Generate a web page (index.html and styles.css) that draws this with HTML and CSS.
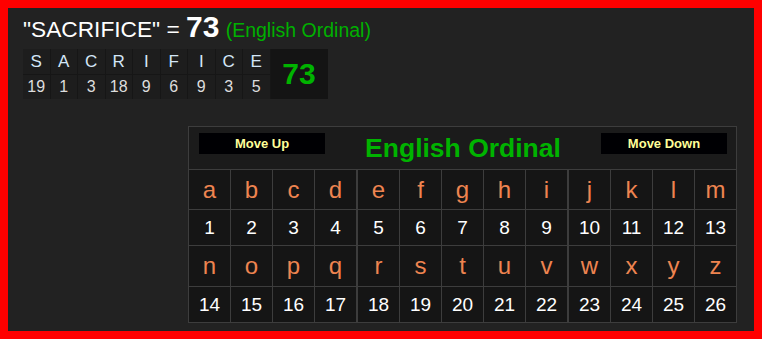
FILE: index.html
```html
<!DOCTYPE html>
<html>
<head>
<meta charset="utf-8">
<link rel="stylesheet" href="styles.css">
</head>
<body>
<div class="page">
  <h1 class="result">"SACRIFICE" = <span class="total">73</span> <span class="cipher-name">(English Ordinal)</span></h1>
  <div class="word">
    <div class="wl">S</div><div class="wl">A</div><div class="wl">C</div><div class="wl">R</div><div class="wl">I</div><div class="wl">F</div><div class="wl">I</div><div class="wl">C</div><div class="wl">E</div>
    <div class="wsum">73</div>
    <div class="wn">19</div><div class="wn">1</div><div class="wn">3</div><div class="wn">18</div><div class="wn">9</div><div class="wn">6</div><div class="wn">9</div><div class="wn">3</div><div class="wn">5</div>
  </div>
  <div class="cipher">
    <div class="cipher-head">
      <div class="btn">Move Up</div>
      <div class="cipher-title">English Ordinal</div>
      <div class="btn">Move Down</div>
    </div>
    <div class="lt">a</div><div class="lt">b</div><div class="lt">c</div><div class="lt">d</div><div class="lt gs">e</div><div class="lt">f</div><div class="lt">g</div><div class="lt">h</div><div class="lt">i</div><div class="lt gs">j</div><div class="lt">k</div><div class="lt">l</div><div class="lt">m</div>
    <div class="nm">1</div><div class="nm">2</div><div class="nm">3</div><div class="nm">4</div><div class="nm gs">5</div><div class="nm">6</div><div class="nm">7</div><div class="nm">8</div><div class="nm">9</div><div class="nm gs">10</div><div class="nm">11</div><div class="nm">12</div><div class="nm">13</div>
    <div class="lt">n</div><div class="lt">o</div><div class="lt">p</div><div class="lt">q</div><div class="lt gs">r</div><div class="lt">s</div><div class="lt">t</div><div class="lt">u</div><div class="lt">v</div><div class="lt gs">w</div><div class="lt">x</div><div class="lt">y</div><div class="lt">z</div>
    <div class="nm">14</div><div class="nm">15</div><div class="nm">16</div><div class="nm">17</div><div class="nm gs">18</div><div class="nm">19</div><div class="nm">20</div><div class="nm">21</div><div class="nm">22</div><div class="nm gs">23</div><div class="nm">24</div><div class="nm">25</div><div class="nm">26</div>
  </div>
</div>
</body>
</html>
```

FILE: styles.css
```css
html, body {
  margin: 0;
  padding: 0;
}
body {
  box-sizing: border-box;
  height: 100vh;
  border: 8px solid #ff0000;
  background: #222222;
  font-family: "Liberation Sans", Arial, sans-serif;
  overflow: hidden;
}
.page {
  padding: 0 0 0 15px;
}
.result {
  margin: 0;
  padding-top: 5px;
  height: 36px;
  font-weight: normal;
  font-size: 22.7px;
  line-height: 28px;
  color: #ffffff;
  white-space: nowrap;
}
.total {
  font-weight: bold;
  font-size: 30px;
}
.cipher-name {
  font-size: 19.5px;
  color: #00b000;
}
.word {
  display: grid;
  grid-template-columns: repeat(9, 26.5px) 57px;
  grid-template-rows: 25px 24px;
  gap: 1px;
  width: max-content;
  background: #161616;
}
.wl, .wn {
  background: #1d1d1d;
  text-align: center;
}
.wl {
  color: #d4e6f7;
  font-size: 17px;
  padding-top: 1px;
  line-height: 24px;
}
.wn {
  color: #dddddd;
  font-size: 16px;
  line-height: 24px;
}
.wsum {
  grid-column: 10;
  grid-row: 1 / span 2;
  background: #141414;
  color: #00b300;
  font-weight: bold;
  font-size: 30px;
  display: flex;
  align-items: center;
  justify-content: center;
}
.cipher {
  margin: 27px 0 0 165px;
  display: grid;
  grid-template-columns: repeat(4, 41px) 42px repeat(4, 41px) 42px repeat(3, 41px);
  grid-template-rows: 42px 39px 35px 40px 35px;
  gap: 1px;
  width: max-content;
  border: 1px solid #3d3d3d;
  background: #3d3d3d;
}
.cipher-head {
  grid-column: 1 / -1;
  background: #1b1b1b;
  display: flex;
  justify-content: space-between;
  align-items: center;
  padding: 0 9px 0 10px;
}
.btn {
  align-self: flex-start;
  margin-top: 6px;
  width: 126px;
  height: 21px;
  background: #000003;
  color: #ffff99;
  font-weight: bold;
  font-size: 13px;
  line-height: 21px;
  text-align: center;
}
.cipher-title {
  color: #00b300;
  font-weight: bold;
  font-size: 26.5px;
  padding-top: 1px;
}
.lt, .nm {
  background: #151515;
  display: flex;
  align-items: center;
  justify-content: center;
}
.gs {
  margin-left: 1px;
}
.lt {
  color: #ee8450;
  font-size: 24px;
}
.nm {
  color: #ffffff;
  font-size: 19px;
  padding-top: 1px;
}
```
